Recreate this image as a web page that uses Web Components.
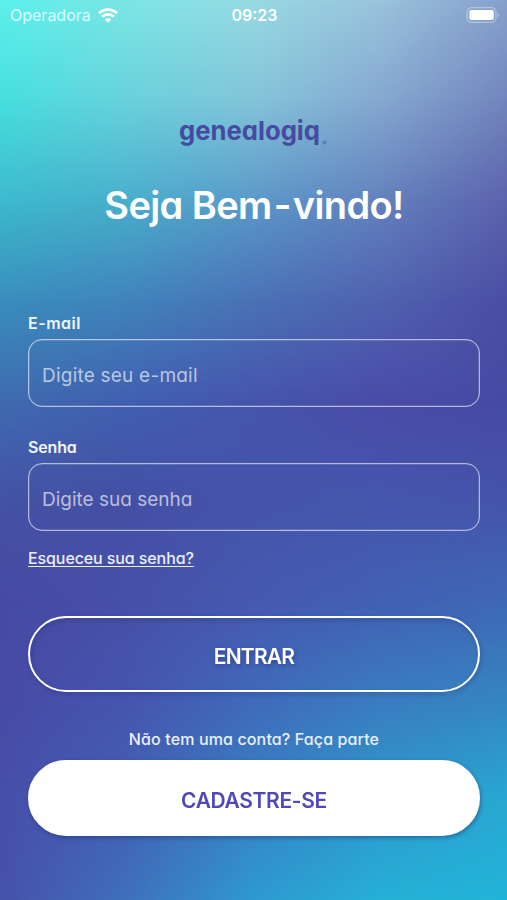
<!DOCTYPE html>
<html lang="pt-BR">
<head>
<meta charset="utf-8">
<meta name="viewport" content="width=device-width, initial-scale=1">
<title>genealogiq</title>
<style>
body {
    margin: 0;
    font-family: Inter, "Liberation Sans", sans-serif;
    font-feature-settings: "cv11";
    color: white;
}
</style>
</head>
<body>

<login-screen>
    <status-bar slot="status" carrier="Operadora" time="09:23"></status-bar>
    <brand-logo></brand-logo>
    <h1>Seja Bem<span>-</span>vindo!</h1>
    <form>
        <text-field label="E-mail" placeholder="Digite seu e-mail" style="--label-spacing: 0.5px; letter-spacing: 0.22px"></text-field>
        <text-field label="Senha" placeholder="Digite sua senha" type="password"></text-field>
        <a href="#">Esqueceu sua senha?</a>
        <pill-button style="letter-spacing: -0.8px">ENTRAR</pill-button>
        <p>Não tem uma conta? Faça parte</p>
        <pill-button filled style="letter-spacing: -0.35px">CADASTRE-SE</pill-button>
    </form>
</login-screen>

<style>
h1 {
    margin: 34px 0 0;
    font-size: 38px;
    line-height: 48px;
    font-weight: 600;
    letter-spacing: -0.6px;
    text-align: center;
    white-space: nowrap;
}

h1 span {
    margin: 0 2px;
}

form {
    display: flex;
    flex-direction: column;
    margin-top: 84px;
}

text-field + text-field {
    margin-top: 30px;
}

a {
    align-self: flex-start;
    margin-top: 17px;
    color: #e9efff;
    font-size: 16px;
    line-height: 20px;
    font-weight: 500;
    letter-spacing: -0.1px;
    text-underline-offset: 2px;
    text-decoration-skip-ink: none;
}

a + pill-button {
    margin-top: 48px;
}

p {
    margin: 37px 0 11px;
    color: #e9f1ff;
    font-size: 16px;
    line-height: 20px;
    font-weight: 500;
    letter-spacing: 0.13px;
    text-align: center;
}
</style>

<script>
function attachTemplate(element, html) {
    const template = document.createElement('template');
    template.innerHTML = html;
    const root = element.attachShadow({ mode: 'open' });
    root.appendChild(template.content.cloneNode(true));
    return root;
}

// Each row is a horizontal gradient, faded into the row above it
const meshRows = [
    ['#5cf0ec', '#7ce6e5', '#97dae3', '#9ac3dc', '#86a0cc'],
    ['#46dfde', '#69d1dc', '#83c4d9', '#85a8d0', '#7285bd'],
    ['#3cbacd', '#49afcc', '#5b99c9', '#6381bd', '#5c63ad'],
    ['#398ebc', '#4084bb', '#4a72b6', '#5062b0', '#4b4ea4'],
    ['#3f6bb0', '#4160b0', '#4655ac', '#4a4ca8', '#474aa2'],
    ['#4452a5', '#4450a4', '#4554aa', '#4556ad', '#4554a9'],
    ['#474aa2', '#4750a8', '#4659b0', '#4260b4', '#3f68b4'],
    ['#474ba5', '#4655af', '#406aba', '#3a7dc0', '#3585c2'],
    ['#474faa', '#4360b4', '#3881c4', '#2f98cb', '#28a8d2'],
    ['#4751aa', '#3f70bc', '#2f99cf', '#25b0d6', '#22b4d8']
];

class LoginScreen extends HTMLElement {
    constructor() {
        super();
        const root = attachTemplate(this, `<style>
            :host {
                display: block;
                position: relative;
                height: 900px;
                overflow: hidden;
            }

            .mesh {
                position: absolute;
                inset: 0;
            }

            .mesh div {
                position: absolute;
                inset: 0;
            }

            .page {
                position: relative;
                display: flex;
                flex-direction: column;
            }

            main {
                display: flex;
                flex-direction: column;
                padding: 87px 27px 0 28px;
            }
        </style>
        <div class="mesh"></div>
        <div class="page">
            <slot name="status"></slot>
            <main><slot></slot></main>
        </div>`);

        const mesh = root.querySelector('.mesh');
        meshRows.forEach((colors, i) => {
            const layer = document.createElement('div');
            layer.style.background = `linear-gradient(to right, ${colors.join(', ')})`;
            if (i > 0) {
                layer.style.maskImage =
                `linear-gradient(transparent ${(i - 1) * 100}px, black ${i * 100}px)`;
            }
            mesh.appendChild(layer);
        });
    }
}

class StatusBar extends HTMLElement {
    constructor() {
        super();
        attachTemplate(this, `<style>
            :host {
                display: grid;
                grid-template-columns: 1fr auto 1fr;
                align-items: center;
                height: 30px;
                padding: 0 8px 0 10px;
                font-size: 16px;
                font-feature-settings: normal;
            }

            .carrier {
                display: flex;
                align-items: center;
                gap: 7px;
                color: #d9fbfb;
            }

            .time {
                font-weight: 600;
            }

            .battery {
                justify-self: end;
            }

            svg {
                display: block;
            }
        </style>
        <div class="carrier">
            <span></span>
            <svg width="20" height="15" viewBox="0 0 20 15" fill="none" stroke="white" stroke-width="2.9">
                <path d="M1 5.2a13 13 0 0 1 18 0M4.1 8.8a8.4 8.4 0 0 1 11.8 0" />
                <path d="M10 14.6 6.8 11.6a4.6 4.6 0 0 1 6.4 0Z" fill="white" stroke="none" />
            </svg>
        </div>
        <div class="time"></div>
        <svg class="battery" width="33" height="16" viewBox="0 0 33 16">
            <rect x="1" y="0.7" width="29" height="14.6" rx="4.5" fill="none" stroke="white" stroke-opacity="0.35" stroke-width="1.3" />
            <rect x="3.3" y="3" width="24.5" height="10" rx="2" fill="white" />
            <path d="M31.5 5.6q1.5.7 1.5 2.4t-1.5 2.4z" fill="white" fill-opacity="0.35" />
        </svg>`);
    }

    connectedCallback() {
        this.shadowRoot.querySelector('.carrier span').textContent = this.getAttribute('carrier');
        this.shadowRoot.querySelector('.time').textContent = this.getAttribute('time');
    }
}

class BrandLogo extends HTMLElement {
    constructor() {
        super();
        attachTemplate(this, `<style>
            :host {
                display: block;
                align-self: center;
                height: 30px;
            }

            svg {
                display: block;
                overflow: visible;
                font-size: 26px;
                font-weight: 700;
                fill: #464b9f;
            }
        </style>
        <svg width="152" height="36" viewBox="-1 0 152 36">
            <text x="0" y="22.5" textLength="141" lengthAdjust="spacingAndGlyphs">genealogiq</text>
            <circle cx="145.5" cy="25.5" r="1.6" fill="#464b9f" fill-opacity="0.3" stroke="#464b9f" stroke-opacity="0.45" />
        </svg>`);
    }
}

class TextField extends HTMLElement {
    constructor() {
        super();
        attachTemplate(this, `<style>
            :host {
                display: block;
            }

            label {
                display: block;
                font-size: 16px;
                line-height: 20px;
                font-weight: 600;
                letter-spacing: var(--label-spacing, -0.15px);
                color: #f1f6ff;
            }

            input {
                display: block;
                box-sizing: border-box;
                width: 100%;
                height: 68px;
                margin-top: 6px;
                padding: 4px 14px 0 13px;
                border: 1px solid rgba(255, 255, 255, 0.6);
                box-shadow: inset 0 0 0 0.5px rgba(255, 255, 255, 0.3);
                border-radius: 14px;
                background: none;
                color: white;
                font: inherit;
                font-size: 19px;
                font-feature-settings: inherit;
                letter-spacing: inherit;
                outline: none;
            }

            input::placeholder {
                color: rgba(255, 255, 255, 0.64);
            }
        </style>
        <label for="field"></label>
        <input id="field" />`);
    }

    connectedCallback() {
        const input = this.shadowRoot.querySelector('input');
        this.shadowRoot.querySelector('label').textContent = this.getAttribute('label');
        input.placeholder = this.getAttribute('placeholder');
        input.type = this.getAttribute('type') || 'text';
    }
}

class PillButton extends HTMLElement {
    constructor() {
        super();
        attachTemplate(this, `<style>
            :host {
                display: block;
            }

            button {
                box-sizing: border-box;
                display: block;
                width: 100%;
                height: 76px;
                padding: 5px 0 0;
                border: 2px solid white;
                border-radius: 38px;
                background: none;
                color: white;
                font: inherit;
                font-size: 21px;
                font-weight: 600;
                letter-spacing: inherit;
                filter: drop-shadow(1px 2px 2px rgba(20, 30, 90, 0.4));
            }

            :host([filled]) button {
                background: white;
                color: #5049b5;
            }
        </style>
        <button type="button"><slot></slot></button>`);
    }
}

window.customElements.define('login-screen', LoginScreen);
window.customElements.define('status-bar', StatusBar);
window.customElements.define('brand-logo', BrandLogo);
window.customElements.define('text-field', TextField);
window.customElements.define('pill-button', PillButton);
</script>
</body>
</html>
